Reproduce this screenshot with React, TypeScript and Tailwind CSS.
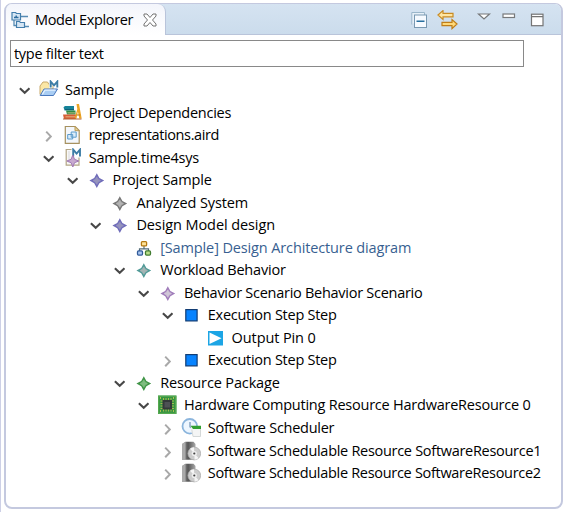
import React from "react";

type Arrow = "open" | "closed" | "none";

function Star({ edge, fill }: { edge: string; fill: string }) {
  return (
    <svg width="20" height="20" viewBox="-0.8 -0.4 20 20">
      <path d="M10 2.8 12.6 7.6 17.4 10.2 12.6 12.8 10 17.6 7.4 12.8 2.6 10.2 7.4 7.6Z" fill={edge} />
      <path d="M10 6.5 11.4 8.8 13.7 10.2 11.4 11.6 10 13.9 8.6 11.6 6.3 10.2 8.6 8.8Z" fill={fill} stroke={fill} strokeWidth=".7" />
    </svg>
  );
}

function FolderIcon() {
  return (
    <svg width="21" height="20" viewBox="-1 0 21 20">
      <path d="M1 14.5V6L4 2H8.5L10 4.5H14V10" fill="#fbe7a5" stroke="#c9a96a" />
      <path d="M1.2 15.5 5 9H18.5L14.5 15.5Z" fill="#a9cdf3" stroke="#4a78bd" />
      <path d="M3.3 14.3 6 10.2H16.5" fill="none" stroke="#e5f2ff" strokeWidth="1.2" />
      <path d="M11.7 8V.6L15 4.6 18.3 .6V8" fill="none" stroke="#fff" strokeWidth="3.2" />
      <path d="M11.7 7.5V1.6L15 5.4 18.3 1.6V7.5" fill="none" stroke="#3d7da6" strokeWidth="1.9" />
    </svg>
  );
}

function BooksIcon() {
  return (
    <svg width="20" height="20" viewBox="-0.5 0 20 20">
      <path d="M1 4.2 2.5 3H11.5V7.5H2Z" fill="#168399" />
      <path d="M3.5 7.5H13V11.5H4.5Z" fill="#2e8b45" />
      <path d="M.5 11.5H13.5V16H1.5Z" fill="#d85f36" />
      <path d="M5 9.9H12.5M3 13.8H13" stroke="#e3c690" strokeWidth=".8" />
      <path d="M2.5 6.5H11.5" stroke="#0e6179" strokeWidth="1" />
      <path d="M14 1H16.5L19.2 15.5H16.8L15.4 8.5 14 15.5H12.2L14.8 6Z" fill="#eda526" />
      <path d="M14.2 12H17.8" stroke="#b97918" />
      <path d="M.5 16H19" stroke="#b26032" />
    </svg>
  );
}

function RepresentationIcon() {
  return (
    <svg width="20" height="20" viewBox="-0.7 0 20 20">
      <path d="M2.6 1.5H12.5L16.5 5.5V18.3H2.6Z" fill="#f3f7fc" stroke="#a6915f" strokeWidth="1.2" />
      <path d="M12.3 1.5V5.7H16.5Z" fill="#ead59c" stroke="#b89b58" />
      <path d="M8.5 7H13.5V12.2H8.5ZM5 9.5H10V14H5Z" fill="#dbedfa" stroke="#5b9bca" />
    </svg>
  );
}

function ModelFileIcon() {
  return (
    <svg width="20" height="20" viewBox="-1 0 20 20">
      <path d="M3.2 1.5H16V17.2H3.2Z" fill="#f8f8f7" stroke="#b3a685" strokeWidth="1.2" />
      <path d="M6 3V15" stroke="#d8d8dc" />
      <path d="M8.5 .5H18.5V9.5H8.5Z" fill="#fff" />
      <path d="M10.2 8.5V1.6L13.6 5.6 17 1.6V8.5" fill="none" stroke="#3d7da6" strokeWidth="1.9" />
      <path d="M9.8 7 11.5 11.3 15.8 13 11.5 14.7 9.8 19 8.1 14.7 3.8 13 8.1 11.3Z" fill="#c7a9cf" stroke="#a17ab4" />
    </svg>
  );
}

function DiagramIcon() {
  return (
    <svg width="20" height="20" viewBox="-1 -0.4 20 20">
      <path d="M10 7V11M5.5 14V10.5H14.5V14" fill="none" stroke="#546c78" strokeWidth="1.2" />
      <rect x="7.4" y="3.2" width="5.2" height="4.3" rx="1" fill="#ffe39a" stroke="#b57a13" strokeWidth="1.3" />
      <rect x="3.5" y="12.5" width="5" height="4.2" rx="1" fill="#a8c5ef" stroke="#315a99" strokeWidth="1.3" />
      <rect x="11.5" y="12.5" width="5" height="4.2" rx="1" fill="#b8dd89" stroke="#427c31" strokeWidth="1.3" />
    </svg>
  );
}

function StepIcon() {
  return (
    <svg width="20" height="20" viewBox="-0.2 0 20 20">
      <rect x="4.6" y="4.6" width="11.3" height="11.3" fill="#0783ff" stroke="#123d74" strokeWidth="1.2" />
    </svg>
  );
}

function PinIcon() {
  return (
    <svg width="20" height="20" viewBox="0 0 20 20">
      <rect x="3" y="3" width="15" height="14.5" fill="#1ca5e5" />
      <path d="M4.5 4.5 16.5 10.3 4.5 16Z" fill="#fff" />
    </svg>
  );
}

function ChipIcon() {
  return (
    <svg width="20" height="20" viewBox="0 0 20 20">
      <rect x="1" y="0.5" width="18.5" height="18.5" fill="#349440" />
      <rect x="1.7" y="1.2" width="17.1" height="17.1" fill="none" stroke="#5fae54" />
      <path d="M6.5 3V16.5M9 3V16.5M11.5 3V16.5M14 3V16.5M3.5 6H17M3.5 8.5H17M3.5 11H17M3.5 13.5H17" stroke="#a9b650" />
      <rect x="5.5" y="5" width="9.5" height="9.5" fill="#343939" />
      <rect x="7.5" y="7" width="5.5" height="5.5" fill="#4d5154" />
      <path d="M3 3h1M16 3h1M3 16h1M16 16h1" stroke="#d4ce55" strokeWidth="1.5" />
    </svg>
  );
}

function SchedulerIcon() {
  return (
    <svg width="20" height="20" viewBox="0 0 20 20">
      <circle cx="8.8" cy="8.3" r="7.3" fill="#edf6ff" stroke="#8bb5dd" strokeWidth="1.8" />
      <path d="M9 4V9L12 11" fill="none" stroke="#6e91b4" strokeWidth="1.2" />
      <path d="M9.8 9H20V19H12L9.8 12Z" fill="#f4f5f5" />
      <path d="M9.5 7.8H20V11H12Z" fill="#31a032" />
      <path d="M19.5 11V18.5H12L10.8 11.5" fill="none" stroke="#d4d8d8" />
    </svg>
  );
}

function ResourceIcon() {
  return (
    <svg width="20" height="20" viewBox="0 0 20 20">
      <defs>
        <linearGradient id="metal" x1="0" x2="1">
          <stop stopColor="#aaa" />
          <stop offset=".45" stopColor="#555" />
          <stop offset="1" stopColor="#aaa" />
        </linearGradient>
      </defs>
      <path d="M1 3 4.5 .8H12.5L14.5 3V18.8H1Z" fill="url(#metal)" />
      <path d="M1 3 4.5 .8V19H1Z" fill="#aaa" />
      <circle cx="13.3" cy="12.5" r="6.4" fill="#ccc" stroke="#aaa" strokeWidth=".7" />
      <path d="M13.3 12.5 9 7.8A6 6 0 0 1 13 6.3ZM13.3 12.5 17.5 17A6 6 0 0 1 13.6 18.7Z" fill="#f5f5f5" />
      <circle cx="13.3" cy="12.5" r="2.6" fill="#eee" />
      <circle cx="13.3" cy="12.5" r="1.1" fill="#444" />
    </svg>
  );
}

const indigo = <Star edge="#706dba" fill="#9694bd" />;

const rows: { level: number; arrow: Arrow; icon: React.ReactNode; label: string; tone?: string; track: string }[] = [
  { level: 0, arrow: "open", icon: <FolderIcon />, label: "Sample", track: "tracking-[-0.15px]" },
  { level: 1, arrow: "none", icon: <BooksIcon />, label: "Project Dependencies", track: "tracking-[-0.24px]" },
  { level: 1, arrow: "closed", icon: <RepresentationIcon />, label: "representations.aird", track: "tracking-[-0.38px]" },
  { level: 1, arrow: "open", icon: <ModelFileIcon />, label: "Sample.time4sys", track: "tracking-[-0.24px]" },
  { level: 2, arrow: "open", icon: indigo, label: "Project Sample", track: "tracking-[-0.15px]" },
  { level: 3, arrow: "none", icon: <Star edge="#777777" fill="#b4b4b4" />, label: "Analyzed System", track: "tracking-[-0.12px]" },
  { level: 3, arrow: "open", icon: indigo, label: "Design Model design", track: "tracking-[-0.09px]" },
  { level: 4, arrow: "none", icon: <DiagramIcon />, label: "[Sample] Design Architecture diagram", tone: "text-[#385f91]", track: "tracking-[-0.13px]" },
  { level: 4, arrow: "open", icon: <Star edge="#529b98" fill="#a6b5b4" />, label: "Workload Behavior", track: "tracking-[-0.19px]" },
  { level: 5, arrow: "open", icon: <Star edge="#a17dbb" fill="#d0c6d7" />, label: "Behavior Scenario Behavior Scenario", track: "tracking-[-0.27px]" },
  { level: 6, arrow: "open", icon: <StepIcon />, label: "Execution Step Step", track: "tracking-[-0.27px]" },
  { level: 7, arrow: "none", icon: <PinIcon />, label: "Output Pin 0", track: "tracking-[-0.1px]" },
  { level: 6, arrow: "closed", icon: <StepIcon />, label: "Execution Step Step", track: "tracking-[-0.27px]" },
  { level: 4, arrow: "open", icon: <Star edge="#419548" fill="#7fbd80" />, label: "Resource Package", track: "tracking-[-0.14px]" },
  { level: 5, arrow: "open", icon: <ChipIcon />, label: "Hardware Computing Resource HardwareResource 0", track: "tracking-[-0.23px]" },
  { level: 6, arrow: "closed", icon: <SchedulerIcon />, label: "Software Scheduler", track: "tracking-[-0.27px]" },
  { level: 6, arrow: "closed", icon: <ResourceIcon />, label: "Software Schedulable Resource SoftwareResource1", track: "tracking-[-0.29px]" },
  { level: 6, arrow: "closed", icon: <ResourceIcon />, label: "Software Schedulable Resource SoftwareResource2", track: "tracking-[-0.3px]" },
];

function Expander({ state }: { state: Arrow }) {
  return (
    <svg width="14" height="14" viewBox="0 0 14 14" fill="none" className="shrink-0">
      {state === "open" && <path d="M1.9 5.2 6.7 9.8 11.5 5.2" stroke="#484848" strokeWidth="2.1" />}
      {state === "closed" && <path d="M4.2 3.6 8.8 8.4 4.2 13.2" stroke="#a9a9a9" strokeWidth="2" />}
    </svg>
  );
}

function Toolbar() {
  return (
    <div className="ml-auto flex pt-[6px] pr-[12px]">
      <svg width="138" height="25" viewBox="0 0 138 25" fill="none">
        <path d="M.8 14.5V2.5H13.5V5" fill="#e7f0f8" stroke="#9ab6ca" />
        <rect x="3.5" y="5" width="12" height="12.5" fill="#f6faff" stroke="#7898b1" />
        <path d="M5.5 11.2H13.5" stroke="#276f9f" strokeWidth="1.6" />
        <path d="M27 5 32 .6V3.3H42V6.8H32V9.4Z" fill="#ffe5a0" stroke="#c98b23" strokeWidth="1.2" />
        <path d="M46 14 41 9.5V12.3H31V15.7H41V18.6Z" fill="#ffd877" stroke="#bf7d17" strokeWidth="1.2" />
        <path d="M67.5 4H78.5L73 9Z" fill="#fff" stroke="#77797b" strokeWidth="1.2" />
        <rect x="92" y="4" width="11.5" height="3.5" fill="#fff" stroke="#77797b" strokeWidth="1.2" />
        <rect x="120.5" y="4.2" width="11.5" height="11.5" fill="#fff" stroke="#747474" strokeWidth="1.2" />
        <path d="M120.5 6.7H132" stroke="#747474" strokeWidth="1.3" />
      </svg>
    </div>
  );
}

export default function App() {
  return (
    <main className="h-[512px] w-[566px] overflow-hidden border-l border-[#cdd0e6] bg-white pt-[3px] pl-[3px] font-['Open_Sans',sans-serif] text-[14.5px] text-black">
      <section className="flex h-[506px] w-[559px] flex-col overflow-hidden rounded-[8px] border-2 border-t border-[#c4c9df] bg-white">
        <header className="flex h-[31px] shrink-0 border-b border-[#b9c4da] bg-linear-to-b from-[#d5e3f1] to-[#cbdcec]">
          <div className="flex h-[31px] w-[160px] shrink-0 items-center rounded-tr-[8px] border-r border-[#b9c4da] bg-linear-to-b from-[#f3f5fb] to-white pt-px pl-[5px]">
            <svg width="20" height="18" viewBox="0 0 20 18" fill="none" className="shrink-0">
              <path d="M3 8V14.5H6M10 5.5H17M14 15.5H18" stroke="#568bb4" strokeWidth="1.3" />
              <path d="M1 1.5H4.5L5.5 2.5H9.5V9H1ZM5.5 10.5H8.5L9.5 11.5H13.5V16.5H5.5Z" fill="#d6e6f4" stroke="#447eac" strokeWidth="1.2" />
              <path d="M3 6.5H7.5M5.2 4.5V6" stroke="#2d6c9e" strokeWidth="1.5" />
            </svg>
            <span className="ml-[4px] w-[99px] whitespace-nowrap tracking-[-0.36px]">Model Explorer</span>
            <svg width="14" height="14" viewBox="0 0 14 14" className="ml-[9px] shrink-0">
              <path d="M1 1H4L7 4.5 10 1H13V3L9.5 7 13 11V13H10L7 9.5 4 13H1V11L4.5 7 1 3Z" fill="#fff" stroke="#737373" />
            </svg>
          </div>
          <Toolbar />
        </header>
        <div className="shrink-0 pt-[5px] pl-[4px]">
          <input aria-label="Filter" defaultValue="type filter text" className="block h-[27px] w-[514px] border-[1.5px] border-[#898989] bg-white px-[3px] pb-[1px] tracking-[-0.3px] outline-none" />
        </div>
        <div className="flex flex-col pt-[12px]">
          {rows.map((row, i) => (
            <div key={i} className="flex h-[22.53px] items-center pl-[12px]" style={{ marginLeft: row.level * 23.8 }}>
              <Expander state={row.arrow} />
              <span className="ml-[6px] h-[20px] w-[20px] shrink-0">{row.icon}</span>
              <span className={`ml-[7px] whitespace-nowrap leading-[20px] ${row.track} ${row.tone ?? ""}`}>{row.label}</span>
            </div>
          ))}
        </div>
      </section>
    </main>
  );
}
